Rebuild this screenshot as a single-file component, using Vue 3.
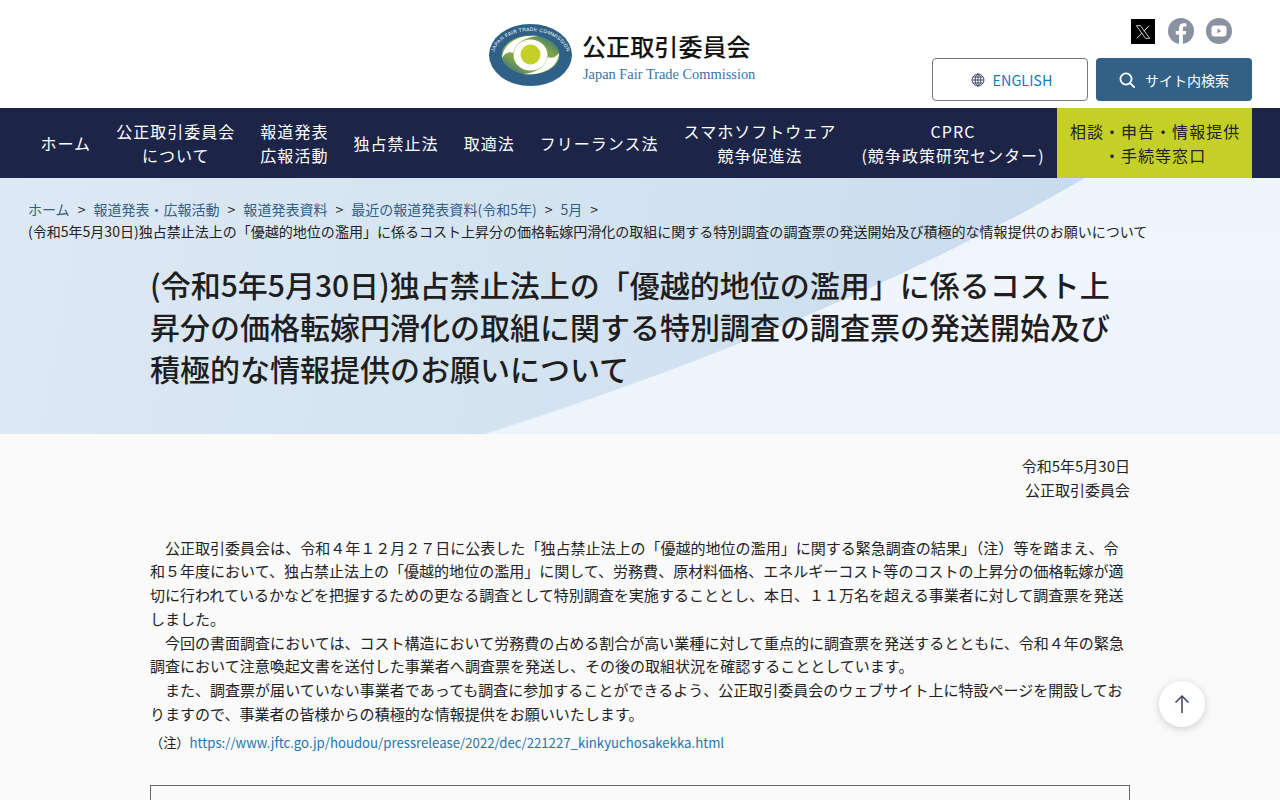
<script setup>
const navItems = [
  ['ホーム'],
  ['公正取引委員会', 'について'],
  ['報道発表', '広報活動'],
  ['独占禁止法'],
  ['取適法'],
  ['フリーランス法'],
  ['スマホソフトウェア', '競争促進法'],
  ['CPRC', '(競争政策研究センター)'],
];

const crumbs = ['ホーム', '報道発表・広報活動', '報道発表資料', '最近の報道発表資料(令和5年)', '5月'];
</script>

<template>
  <div class="page">
    <header class="header">
      <a class="logo" href="#">
        <svg class="logo-mark" viewBox="0 0 83 62" width="83" height="62">
          <defs>
            <linearGradient id="swirl" x1="0.9" y1="0.1" x2="0.1" y2="0.9">
              <stop offset="0" stop-color="#3f7480" />
              <stop offset="0.25" stop-color="#7fa544" />
              <stop offset="0.75" stop-color="#7fa544" />
              <stop offset="1" stop-color="#3f7480" />
            </linearGradient>
            <path id="arc" d="M4.5 33 A37 26 0 1 1 78.5 33" />
          </defs>
          <ellipse cx="41.5" cy="31" rx="41.5" ry="31" fill="#2f6088" />
          <ellipse cx="41.5" cy="31" rx="29" ry="19.5" fill="url(#swirl)" />
          <path d="M13 34 C14 19 30 10 49 12 C37 13 27 18 24 29 C20 27 16 29 13 34 Z" fill="#fff" />
          <path d="M70 29 C69 44 53 52 34 50 C46 49 56 44 59 33 C63 35 67 33 70 29 Z" fill="#fff" />
          <ellipse cx="41.5" cy="31" rx="17" ry="15.5" fill="#fff" />
          <circle cx="41.5" cy="30.5" r="10" fill="#c4d027" />
          <text class="logo-arc" fill="#fff">
            <textPath href="#arc" startOffset="50%" text-anchor="middle">JAPAN FAIR TRADE COMMISSION</textPath>
          </text>
        </svg>
        <span class="logo-text">
          <span class="logo-ja">公正取引委員会</span>
          <span class="logo-en">Japan Fair Trade Commission</span>
        </span>
      </a>

      <div class="tools">
        <div class="social">
          <a class="x-icon" href="#">
            <svg viewBox="0 0 24 24" width="16" height="16">
              <path d="M2 2.5h6.2l13.8 19h-6.2z" fill="none" stroke="#e6e6e6" stroke-width="1.3" />
              <path d="M21 2.5 13.4 10.8M10.4 13.9 2.8 21.5" fill="none" stroke="#e6e6e6" stroke-width="1.5" />
            </svg>
          </a>
          <a href="#">
            <svg viewBox="0 0 26 26" width="26" height="26">
              <circle cx="13" cy="13" r="13" fill="#8a91a1" />
              <path d="M11 26v-9.5H7.8v-3.6H11v-2.7c0-3.2 1.9-5 4.8-5 1.4 0 2.6.2 2.6.2v3.1h-1.5c-1.5 0-2 .9-2 1.9v2.5h3.4l-.6 3.6h-2.8V26z" fill="#fff" />
            </svg>
          </a>
          <a href="#">
            <svg viewBox="0 0 26 26" width="26" height="26">
              <circle cx="13" cy="13" r="13" fill="#8a91a1" />
              <rect x="5.5" y="7.5" width="15" height="11" rx="3" fill="#fff" />
              <path d="M11.4 10.6v4.8l4-2.4z" fill="#8a91a1" />
            </svg>
          </a>
        </div>
        <div class="buttons">
          <a class="btn btn-lang" href="#">
            <svg viewBox="0 0 16 16" width="14" height="14" fill="none" stroke="#3d4465" stroke-width="1.1">
              <circle cx="8" cy="8" r="6.8" />
              <ellipse cx="8" cy="8" rx="3.2" ry="6.8" />
              <path d="M8 1.2v13.6M1.2 8h13.6M2.2 4.6h11.6M2.2 11.4h11.6" />
            </svg>
            <span>ENGLISH</span>
          </a>
          <a class="btn btn-search" href="#">
            <svg viewBox="0 0 16 16" width="16" height="16" fill="none" stroke="#fff" stroke-width="1.8">
              <circle cx="7" cy="7" r="5.6" />
              <path d="M11 11l4.2 4.2" stroke-linecap="round" />
            </svg>
            <span>サイト内検索</span>
          </a>
        </div>
      </div>
    </header>

    <nav class="nav">
      <a v-for="item in navItems" :key="item[0]" class="nav-item" href="#">
        <span v-for="line in item" :key="line">{{ line }}</span>
      </a>
      <a class="nav-item nav-contact" href="#">
        <span>相談・申告・情報提供</span>
        <span>・手続等窓口</span>
      </a>
    </nav>

    <section class="hero">
      <div class="hero-inner">
        <ol class="crumbs">
          <li v-for="c in crumbs" :key="c"><a href="#">{{ c }}</a><span class="sep">&gt;</span></li>
          <li class="current">(令和5年5月30日)独占禁止法上の「優越的地位の濫用」に係るコスト上昇分の価格転嫁円滑化の取組に関する特別調査の調査票の発送開始及び積極的な情報提供のお願いについて</li>
        </ol>
        <h1>(令和5年5月30日)独占禁止法上の「優越的地位の濫用」に係るコスト上昇分の価格転嫁円滑化の取組に関する特別調査の調査票の発送開始及び積極的な情報提供のお願いについて</h1>
      </div>
    </section>

    <main class="content">
      <div class="dateline">
        <p>令和5年5月30日</p>
        <p>公正取引委員会</p>
      </div>
      <div class="body-text">
        <p>　公正取引委員会は、令和４年１２月２７日に公表した「独占禁止法上の「優越的地位の濫用」に関する緊急調査の結果」（注）等を踏まえ、令和５年度において、独占禁止法上の「優越的地位の濫用」に関して、労務費、原材料価格、エネルギーコスト等のコストの上昇分の価格転嫁が適切に行われているかなどを把握するための更なる調査として特別調査を実施することとし、本日、１１万名を超える事業者に対して調査票を発送しました。</p>
        <p>　今回の書面調査においては、コスト構造において労務費の占める割合が高い業種に対して重点的に調査票を発送するとともに、令和４年の緊急調査において注意喚起文書を送付した事業者へ調査票を発送し、その後の取組状況を確認することとしています。</p>
        <p>　また、調査票が届いていない事業者であっても調査に参加することができるよう、公正取引委員会のウェブサイト上に特設ページを開設しておりますので、事業者の皆様からの積極的な情報提供をお願いいたします。</p>
      </div>
      <p class="note">（注）<a href="#">https://www.jftc.go.jp/houdou/pressrelease/2022/dec/221227_kinkyuchosakekka.html</a></p>
      <div class="box"></div>
    </main>

    <a class="to-top" href="#">
      <svg viewBox="0 0 18 20" width="18" height="20" fill="none" stroke="#3d4465" stroke-width="1.5">
        <path d="M9 19V2M2.5 8.5 9 2l6.5 6.5" />
      </svg>
    </a>
  </div>
</template>

<style>
html, body {
  margin: 0;
  background: #fafafa;
}
</style>

<style scoped>
.page {
  font-family: "Noto Sans CJK JP", "Noto Sans", sans-serif;
  color: #222;
}
a {
  text-decoration: none;
}
p {
  margin: 0;
}

.header {
  height: 108px;
  background: #fff;
  display: flex;
  justify-content: space-between;
  padding: 18px 28px 0 489px;
  box-sizing: border-box;
}
.logo {
  display: flex;
  align-items: flex-start;
  gap: 10px;
  margin-top: 6px;
  color: inherit;
}
.logo-mark {
  display: block;
}
.logo-arc {
  font-family: "Liberation Sans", sans-serif;
  font-size: 5px;
  letter-spacing: 0.3px;
}
.logo-text {
  display: flex;
  flex-direction: column;
}
.logo-ja {
  font-size: 24.1px;
  font-weight: 500;
  line-height: 34px;
  color: #111;
  margin-top: 5px;
  white-space: nowrap;
}
.logo-en {
  font-family: "Liberation Serif", serif;
  font-size: 14.4px;
  line-height: 20px;
  margin: 1px 0 0 1px;
  color: #3a74a6;
  white-space: nowrap;
}
.tools {
  width: 320px;
  display: flex;
  flex-direction: column;
  align-items: flex-end;
}
.social {
  display: flex;
  align-items: center;
  gap: 12px;
  margin-right: 20px;
  height: 26px;
}
.social a {
  display: block;
  height: 26px;
}
.x-icon {
  width: 24px;
  height: 25px !important;
  background: #000;
  display: flex !important;
  align-items: center;
  justify-content: center;
  margin: 1px 1px 0 0;
}
.buttons {
  display: flex;
  gap: 8px;
  margin-top: 14px;
}
.btn {
  width: 156px;
  height: 43px;
  box-sizing: border-box;
  border-radius: 4px;
  display: flex;
  align-items: center;
  justify-content: center;
  font-size: 14px;
}
.btn-lang {
  border: 1px solid #777;
  color: #1a7ab5;
  gap: 8px;
  font-size: 14.4px;
  padding-left: 3px;
}
.btn-search {
  background: #326087;
  color: #fff;
  gap: 10px;
}

.nav {
  height: 70px;
  background: #1c2548;
  display: flex;
  padding: 0 28px;
}
.nav-item {
  display: flex;
  flex-direction: column;
  align-items: center;
  justify-content: center;
  padding: 0 12.5px;
  font-size: 16px;
  line-height: 24px;
  letter-spacing: 1.03px;
  color: #fff;
  white-space: nowrap;
}
.nav-contact {
  flex: 0 0 195px;
  box-sizing: border-box;
  margin-left: auto;
  padding: 0 0 0 1px;
  background: #c4d027;
  color: #222;
}

.hero {
  position: relative;
  height: 256px;
  background: linear-gradient(100deg, #dde9f4 0%, #d2e2f0 50%, #c9dcee 80%);
  overflow: hidden;
}
.hero::before {
  content: "";
  position: absolute;
  inset: 0;
  background: linear-gradient(180deg, #eef6fa 0%, #f0f5fd 50%, #eef4fc 100%);
  clip-path: path("M1085 0 Q839 143 485 256 L1280 256 L1280 0 Z");
}
.hero-inner {
  position: relative;
  padding: 20px 28px 0;
}
.crumbs {
  list-style: none;
  margin: 0;
  padding: 0;
  display: flex;
  flex-wrap: wrap;
  font-size: 14.03px;
  line-height: 22px;
}
.crumbs a {
  color: #336086;
}
.sep {
  margin: 0 8px;
  color: #222;
}
.current {
  color: #222;
}
h1 {
  margin: 21px 122px 0;
  font-size: 30px;
  font-weight: 500;
  line-height: 42px;
  color: #1e1e1e;
}

.content {
  width: 980px;
  margin: 0 auto;
  padding: 20px 0 40px;
}
.dateline {
  text-align: right;
  font-size: 15px;
  line-height: 24px;
}
.body-text {
  margin-top: 33.5px;
  font-size: 15.03px;
  line-height: 23.8px;
}
.note {
  margin-top: 5.5px;
  font-size: 13.2px;
  line-height: 24px;
}
.note a {
  color: #1a75b0;
}
.box {
  margin-top: 30px;
  height: 200px;
  border: 1px solid #666;
}

.to-top {
  position: fixed;
  left: 1159px;
  top: 681px;
  width: 46px;
  height: 46px;
  border-radius: 50%;
  background: #fff;
  box-shadow: 0 2px 8px rgba(0, 0, 0, 0.18);
  display: flex;
  align-items: center;
  justify-content: center;
}
</style>
